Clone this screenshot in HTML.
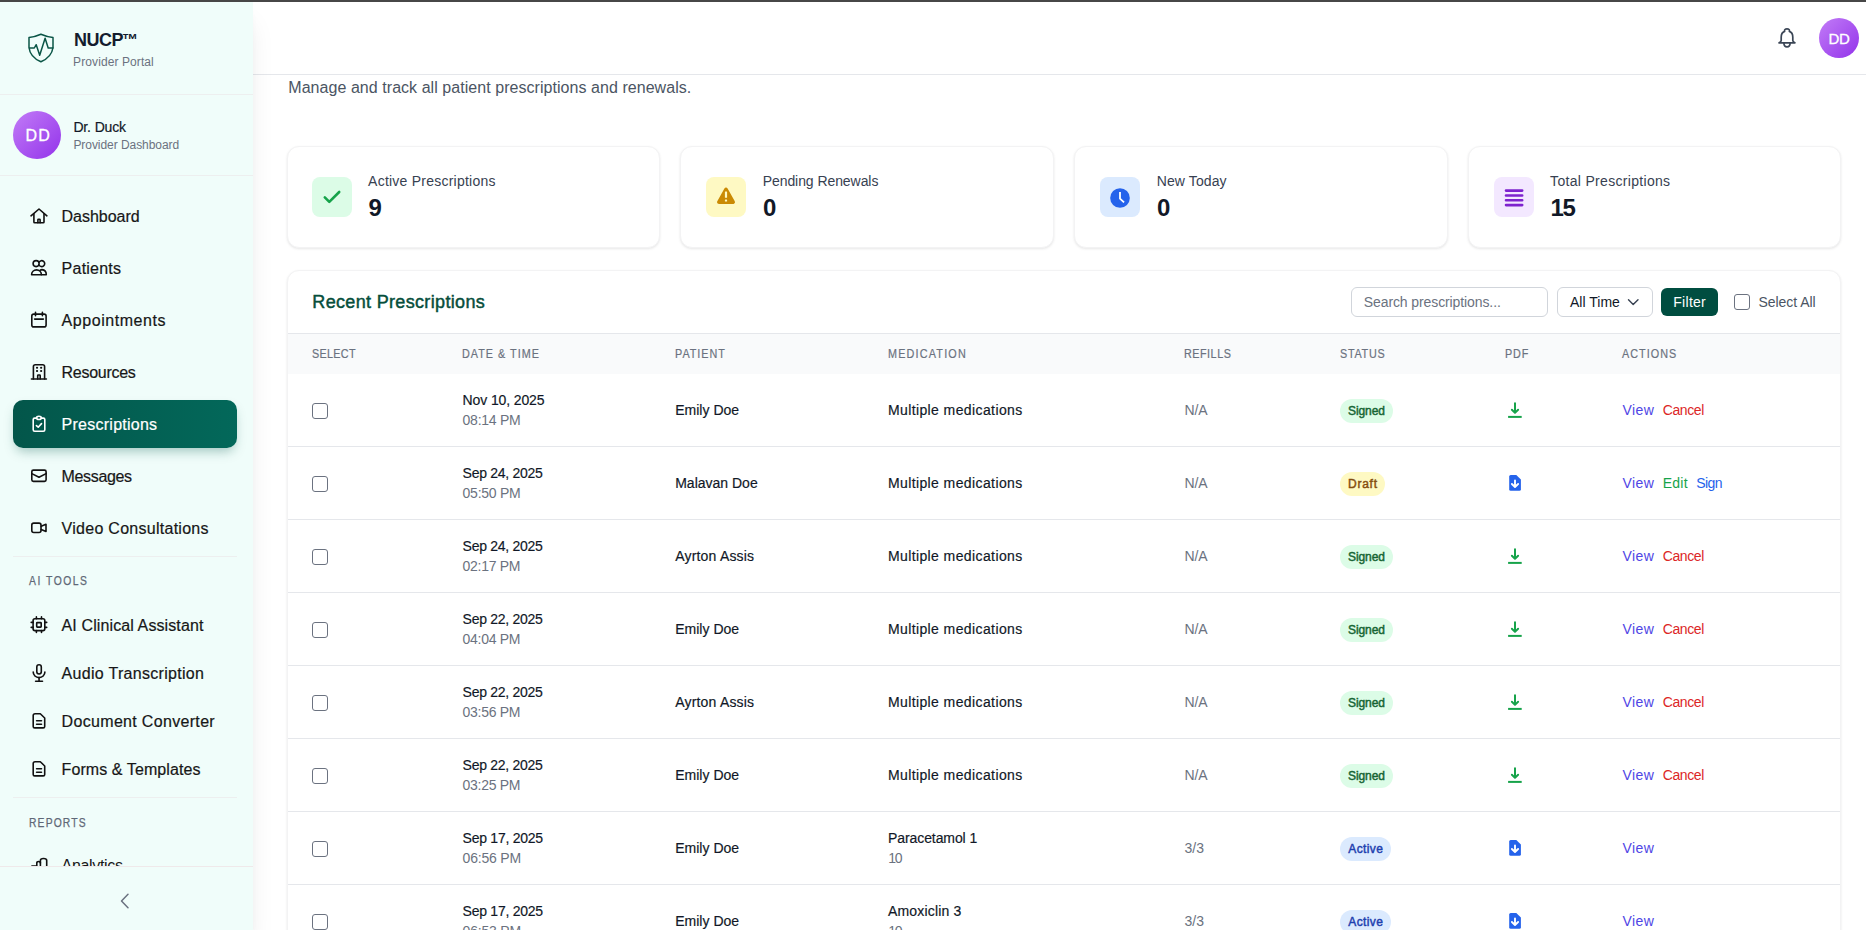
<!DOCTYPE html><html><head><meta charset="utf-8"><style>
*{box-sizing:border-box;margin:0;padding:0}
html,body{width:1866px;height:930px;overflow:hidden;background:#fff;font-family:"Liberation Sans",sans-serif;color:#111827}
.abs{position:absolute;white-space:nowrap}
.topbar{position:absolute;left:0;top:0;width:1866px;height:2px;background:#474747;z-index:50}
.side{position:absolute;left:0;top:0;width:253px;height:930px;background:#f0fdfa;z-index:10;overflow:hidden}
.sideshadow{position:absolute;left:0;top:0;width:253px;height:930px;z-index:9;box-shadow:0 20px 25px -5px rgba(0,0,0,.1),0 8px 10px -6px rgba(0,0,0,.1)}
.ic{position:absolute;width:32px;height:32px;fill:none;stroke:#111;stroke-width:1.6;stroke-linecap:round;stroke-linejoin:round}
.nt{position:absolute;left:61px;font-size:16px;line-height:16px;color:#171717;white-space:nowrap;letter-spacing:.25px}
.sec{position:absolute;left:29px;font-size:12px;line-height:12px;font-weight:bold;letter-spacing:.5px;color:#6b7b8c}
.hr{position:absolute;height:1px;background:#edefef}
.card{position:absolute;background:#fff;border:1px solid #f3f3f4;border-radius:12px;box-shadow:0 1px 3px rgba(0,0,0,.07),0 1px 2px rgba(0,0,0,.03)}
.ib{position:absolute;width:40px;height:40px;border-radius:8px}
.lb{position:absolute;font-size:14px;line-height:14px;color:#374151;white-space:nowrap}
.vl{position:absolute;font-size:24px;line-height:24px;font-weight:bold;color:#111827;white-space:nowrap}
.th{position:absolute;font-size:12px;line-height:12px;letter-spacing:.6px;color:#6b7280;white-space:nowrap}
.td{position:absolute;font-size:14px;line-height:14px;color:#111827;white-space:nowrap}
.cb{position:absolute;width:16px;height:16px;border:1.3px solid #6b7280;border-radius:3px;background:#fff}
.badge{position:absolute;height:24px;line-height:24px;padding:0 8px;border-radius:12px;font-size:12px;font-weight:bold;white-space:nowrap}
.signed{background:#dcfce7;color:#166534}
.draft{background:#fef9c3;color:#854d0e}
.activeb{background:#dbeafe;color:#1e40af}
.v{color:#4f46e5}.c{color:#dc2626}.e{color:#16a34a}.s{color:#2563eb}
</style></head><body>
<div class="topbar"></div>
<div class="sideshadow"></div>
<div class="side">
<svg class="ic" style="left:25px;top:30px;width:32px;height:36px;stroke:#0a5546;stroke-width:1.5" viewBox="0 0 32 36"><path d="M15.9 4.2 Q10 6.8 4 7.6 V17.5 Q5 27 15.9 31.8 Q26.8 27 28 17.5 V7.6 Q22 6.8 15.9 4.2Z"/><path d="M4.5 18 H9.3 L11.2 14.7 L14.7 25.2 L20.1 8.3 L23.2 18 H28"/></svg>
<div class="abs" style="left:74.10px;top:31px;font-size:18px;line-height:18px;font-weight:bold;color:#141c2e;letter-spacing:0.000px;letter-spacing:-.55px">NUCP</div>
<div class="abs" style="left:122px;top:31px;font-size:16px;line-height:17px;font-weight:bold;color:#141c2e">™</div>
<div class="abs" style="left:73.10px;top:56px;font-size:12px;line-height:12px;font-weight:normal;color:#6b7280;letter-spacing:0.095px;">Provider Portal</div>
<div class="hr" style="left:0;top:94px;width:253px;background:#edefef"></div>
<div class="abs" style="left:13px;top:111px;width:48px;height:48px;border-radius:24px;background:linear-gradient(135deg,#c27cf7,#9333ea);"></div>
<div class="abs" style="left:25.50px;top:128px;font-size:16px;line-height:16px;font-weight:normal;color:#fff;letter-spacing:1.275px;-webkit-text-stroke:.3px #fff">DD</div>
<div class="abs" style="left:73.40px;top:120px;font-size:14px;line-height:14px;font-weight:normal;color:#111827;letter-spacing:-0.136px;-webkit-text-stroke:.18px #111827">Dr. Duck</div>
<div class="abs" style="left:73.40px;top:139px;font-size:12px;line-height:12px;font-weight:normal;color:#6b7280;letter-spacing:-0.056px;">Provider Dashboard</div>
<div class="hr" style="left:0;top:175px;width:253px;background:#edefef"></div>
<div class="abs" style="left:13px;top:400px;width:224px;height:48px;border-radius:10px;background:linear-gradient(90deg,#03564a,#03685a);box-shadow:0 6px 12px -3px rgba(3,86,74,.35)"></div>
<svg class="ic" style="left:24px;top:200px;stroke:#111" viewBox="0 0 32 32"><path d="M7 15.8 L15 9 L22.9 15.8"/><path d="M9.9 13.8 V22 Q9.9 22.8 10.7 22.8 H19.2 Q20 22.8 20 22 V13.8"/><path d="M13.9 22.8 V19.8 Q13.9 19.2 14.5 19.2 H15.5 Q16.1 19.2 16.1 19.8 V22.8"/></svg>
<div class="abs" style="left:61.60px;top:209px;font-size:16px;line-height:16px;font-weight:normal;color:#171717;letter-spacing:-0.031px;-webkit-text-stroke:.2px #171717">Dashboard</div>
<svg class="ic" style="left:24px;top:252px;stroke:#111" viewBox="0 0 32 32"><circle cx="12.1" cy="11.6" r="3"/><path d="M15.05 10.2 A3 3 0 1 1 15.05 13"/><path d="M7.6 22.8 A4.9 4.9 0 0 1 17.4 22.8 Z"/><path d="M16 18.3 Q17 17.6 18 17.6 Q22.3 18 22.3 22.8 H17.4"/></svg>
<div class="abs" style="left:61.60px;top:261px;font-size:16px;line-height:16px;font-weight:normal;color:#171717;letter-spacing:0.232px;-webkit-text-stroke:.2px #171717">Patients</div>
<svg class="ic" style="left:24px;top:304px;stroke:#111" viewBox="0 0 32 32"><rect x="7.8" y="10.1" width="14.3" height="12.8" rx="2"/><path d="M11.5 8.3 V11.8 M18.4 8.3 V11.8 M10.6 15.1 H19.4"/></svg>
<div class="abs" style="left:61.60px;top:313px;font-size:16px;line-height:16px;font-weight:normal;color:#171717;letter-spacing:0.548px;-webkit-text-stroke:.2px #171717">Appointments</div>
<svg class="ic" style="left:24px;top:356px;stroke:#111" viewBox="0 0 32 32"><path d="M9.4 23 V10.6 Q9.4 8.7 11.3 8.7 H18.7 Q20.6 8.7 20.6 10.6 V23"/><path d="M7.4 23 H22.4"/><path d="M13.7 23 V19.6 Q13.7 19 14.3 19 H15.6 Q16.2 19 16.2 19.6 V23"/><path d="M12.9 11.8 h.3 M17 11.8 h.3 M12.9 15 h.3 M17 15 h.3" stroke-width="1.9"/></svg>
<div class="abs" style="left:61.60px;top:365px;font-size:16px;line-height:16px;font-weight:normal;color:#171717;letter-spacing:-0.275px;-webkit-text-stroke:.2px #171717">Resources</div>
<svg class="ic" style="left:24px;top:408px;stroke:#fff" viewBox="0 0 32 32"><path d="M12.6 10.1 H10.7 Q9.2 10.1 9.2 11.6 V21.8 Q9.2 23.3 10.7 23.3 H19.3 Q20.8 23.3 20.8 21.8 V11.6 Q20.8 10.1 19.3 10.1 H17.3"/><ellipse cx="14.95" cy="9.9" rx="2.3" ry="1.6"/><path d="M12.4 17.6 L14.2 19.2 L17.5 15.6"/></svg>
<div class="abs" style="left:61.60px;top:417px;font-size:16px;line-height:16px;font-weight:normal;color:#fff;letter-spacing:0.250px;-webkit-text-stroke:.2px #fff">Prescriptions</div>
<svg class="ic" style="left:24px;top:460px;stroke:#111" viewBox="0 0 32 32"><rect x="7.8" y="10.1" width="14.3" height="11.3" rx="1.6"/><path d="M7.8 13.6 L15 17.2 L22.1 13.6"/></svg>
<div class="abs" style="left:61.60px;top:469px;font-size:16px;line-height:16px;font-weight:normal;color:#171717;letter-spacing:-0.354px;-webkit-text-stroke:.2px #171717">Messages</div>
<svg class="ic" style="left:24px;top:512px;stroke:#111" viewBox="0 0 32 32"><rect x="7.8" y="11.1" width="9.2" height="9.4" rx="2"/><path d="M17.2 14.3 L22 12.3 V19.5 L17.2 17.5"/></svg>
<div class="abs" style="left:61.60px;top:521px;font-size:16px;line-height:16px;font-weight:normal;color:#171717;letter-spacing:0.272px;-webkit-text-stroke:.2px #171717">Video Consultations</div>
<div class="hr" style="left:13px;top:556px;width:224px"></div>
<div class="abs" style="left:28.90px;top:575px;font-size:12px;line-height:12px;font-weight:normal;color:#5f6877;letter-spacing:1.779px;transform:scaleX(0.86);transform-origin:0.00px 0;-webkit-text-stroke:.25px #5f6877">AI TOOLS</div>
<svg class="ic" style="left:24px;top:609px;stroke:#111" viewBox="0 0 32 32"><rect x="9.1" y="9.7" width="11.7" height="11.9" rx="1.8"/><rect x="12.7" y="13.6" width="4.5" height="4.5" rx=".6"/><path d="M12.4 7.9 V9.7 M17.5 7.9 V9.7 M12.4 21.6 V23.4 M17.5 21.6 V23.4 M7.2 13.4 H9.1 M7.2 18.4 H9.1 M20.8 13.4 H22.7 M20.8 18.4 H22.7"/></svg>
<div class="abs" style="left:61.60px;top:618px;font-size:16px;line-height:16px;font-weight:normal;color:#171717;letter-spacing:0.109px;-webkit-text-stroke:.2px #171717">AI Clinical Assistant</div>
<svg class="ic" style="left:24px;top:657px;stroke:#111" viewBox="0 0 32 32"><rect x="12.8" y="7.7" width="4.5" height="9.3" rx="2.25"/><path d="M9.2 15.1 A5.85 5.5 0 0 0 20.9 15.1"/><path d="M15.05 20.6 V24.3 M11.6 24.3 H18.5"/></svg>
<div class="abs" style="left:61.60px;top:666px;font-size:16px;line-height:16px;font-weight:normal;color:#171717;letter-spacing:0.294px;-webkit-text-stroke:.2px #171717">Audio Transcription</div>
<svg class="ic" style="left:24px;top:705px;stroke:#111" viewBox="0 0 32 32"><path d="M9.2 21.4 V10.6 Q9.2 8.7 11.1 8.7 H16.3 L20.7 13 V21.4 Q20.7 22.9 19.2 22.9 H10.7 Q9.2 22.9 9.2 21.4Z"/><path d="M12.6 15.8 H17.5 M12.6 19.3 H17.5"/></svg>
<div class="abs" style="left:61.60px;top:714px;font-size:16px;line-height:16px;font-weight:normal;color:#171717;letter-spacing:0.322px;-webkit-text-stroke:.2px #171717">Document Converter</div>
<svg class="ic" style="left:24px;top:753px;stroke:#111" viewBox="0 0 32 32"><path d="M9.2 21.4 V10.6 Q9.2 8.7 11.1 8.7 H16.3 L20.7 13 V21.4 Q20.7 22.9 19.2 22.9 H10.7 Q9.2 22.9 9.2 21.4Z"/><path d="M12.6 15.8 H17.5 M12.6 19.3 H17.5"/></svg>
<div class="abs" style="left:61.60px;top:762px;font-size:16px;line-height:16px;font-weight:normal;color:#171717;letter-spacing:0.081px;-webkit-text-stroke:.2px #171717">Forms &amp; Templates</div>
<div class="hr" style="left:13px;top:797px;width:224px"></div>
<div class="abs" style="left:28.90px;top:817px;font-size:12px;line-height:12px;font-weight:normal;color:#5f6877;letter-spacing:1.344px;transform:scaleX(0.86);transform-origin:0.00px 0;-webkit-text-stroke:.25px #5f6877">REPORTS</div>
<svg class="ic" style="left:24px;top:840px;" viewBox="0 0 32 32"><path d="M7.9 26 H12.8 V23 Q12.8 21.5 14.6 21.5 Q16.4 21.5 16.4 23 V32"/><path d="M16.4 23 V20.5 Q16.4 18.5 19.5 18.5 Q22.7 18.5 22.7 20.5 V32"/></svg>
<div class="abs" style="left:61.60px;top:858px;font-size:16px;line-height:16px;font-weight:normal;color:#171717;letter-spacing:-0.325px;">Analytics</div>
<div class="abs" style="left:0;top:866px;width:253px;height:64px;background:#f0fdfa;border-top:1px solid #efe9ea"></div>
<svg class="ic" style="left:109px;top:885px;stroke:#6b7280;stroke-width:1.5" viewBox="0 0 32 32"><path d="M19 9.3 L12.5 16 L19 22.8"/></svg>
</div>
<div class="abs" style="left:253px;top:0;width:1613px;height:75px;background:#fff;border-bottom:1px solid #e5e7eb"></div>
<svg class="ic" style="left:1770px;top:20px;width:32px;height:36px;stroke:#3b4656;stroke-width:1.7" viewBox="0 0 32 36"><path d="M9.1 22.8 H24.9 Q22.8 21.9 22.8 20.6 V17.2 Q22.8 12.6 19.4 11.4 Q19.9 8.9 17 8.9 Q14.1 8.9 14.6 11.4 Q11.2 12.6 11.2 17.2 V20.6 Q11.2 21.9 9.1 22.8 Z"/><path d="M13.9 23 Q13.9 26.9 17 26.9 Q20.1 26.9 20.1 23"/></svg>
<div class="abs" style="left:1819px;top:18px;width:40px;height:40px;border-radius:20px;background:linear-gradient(135deg,#c27cf7,#9333ea)"></div>
<div class="abs" style="left:1828.40px;top:31px;font-size:15px;line-height:15px;font-weight:normal;color:#fff;letter-spacing:-0.325px;-webkit-text-stroke:.3px #fff">DD</div>
<div class="abs" style="left:288.30px;top:80px;font-size:16px;line-height:16px;font-weight:normal;color:#4b5563;letter-spacing:0.050px;">Manage and track all patient prescriptions and renewals.</div>
<div class="card" style="left:287px;top:146px;width:373px;height:102px"></div>
<div class="ib" style="left:312px;top:177px;background:#dcfce7"><svg viewBox="0 0 40 40" style="position:absolute;left:0;top:0;width:40px;height:40px;fill:none;stroke:#16a34a;stroke-width:2.6;stroke-linecap:round;stroke-linejoin:round"><path d="M12.8 20.3 L17.3 24.8 L27.2 15"/></svg></div>
<div class="abs" style="left:368.10px;top:174px;font-size:14px;line-height:14px;font-weight:normal;color:#374151;letter-spacing:0.232px;">Active Prescriptions</div>
<div class="abs" style="left:368.60px;top:196px;font-size:24px;line-height:24px;font-weight:bold;color:#111827;letter-spacing:0.000px;">9</div>
<div class="card" style="left:680px;top:146px;width:374px;height:102px"></div>
<div class="ib" style="left:706px;top:177px;background:#fef9c3"><svg viewBox="0 0 40 40" style="position:absolute;left:0;top:0;width:40px;height:40px"><path d="M20 10.6 Q21 10.6 21.6 11.6 L28.8 24.2 Q29.6 25.8 28 26.7 Q27.6 27 27 27 H13 Q11.2 27 11 25.2 Q11 24.7 11.3 24.2 L18.4 11.6 Q19 10.6 20 10.6Z" fill="#ca8a04"/><rect x="18.9" y="14.4" width="2.2" height="6.4" rx=".5" fill="#fef9c3"/><rect x="18.9" y="22.4" width="2.2" height="2" rx=".5" fill="#fef9c3"/></svg></div>
<div class="abs" style="left:762.70px;top:174px;font-size:14px;line-height:14px;font-weight:normal;color:#374151;letter-spacing:-0.070px;">Pending Renewals</div>
<div class="abs" style="left:763.00px;top:196px;font-size:24px;line-height:24px;font-weight:bold;color:#111827;letter-spacing:0.000px;">0</div>
<div class="card" style="left:1074px;top:146px;width:374px;height:102px"></div>
<div class="ib" style="left:1100px;top:177px;background:#dbeafe"><svg viewBox="0 0 40 40" style="position:absolute;left:0;top:0;width:40px;height:40px"><circle cx="20" cy="21" r="9.8" fill="#2563eb"/><path d="M20 16 V21.6 L23.4 24.8" fill="none" stroke="#fff" stroke-width="1.8" stroke-linecap="square"/></svg></div>
<div class="abs" style="left:1156.80px;top:174px;font-size:14px;line-height:14px;font-weight:normal;color:#374151;letter-spacing:0.088px;">New Today</div>
<div class="abs" style="left:1157.00px;top:196px;font-size:24px;line-height:24px;font-weight:bold;color:#111827;letter-spacing:0.000px;">0</div>
<div class="card" style="left:1468px;top:146px;width:373px;height:102px"></div>
<div class="ib" style="left:1494px;top:177px;background:#f3e8ff"><svg viewBox="0 0 40 40" style="position:absolute;left:0;top:0;width:40px;height:40px;stroke:#7e22ce;stroke-width:2.6;stroke-linecap:round"><path d="M12 13.6 H28.2 M12 18.5 H28.2 M12 23.3 H28.2 M12 28.1 H28.2"/></svg></div>
<div class="abs" style="left:1550.10px;top:174px;font-size:14px;line-height:14px;font-weight:normal;color:#374151;letter-spacing:0.312px;">Total Prescriptions</div>
<div class="abs" style="left:1550.50px;top:196px;font-size:24px;line-height:24px;font-weight:bold;color:#111827;letter-spacing:-1.250px;">15</div>
<div class="card" style="left:287px;top:270px;width:1554px;height:700px"></div>
<div class="abs" style="left:312.30px;top:293px;font-size:18px;line-height:18px;font-weight:normal;color:#064e3b;letter-spacing:0.336px;-webkit-text-stroke:.45px #064e3b">Recent Prescriptions</div>
<div class="abs" style="left:1351px;top:287px;width:197px;height:30px;border:1px solid #d1d5db;border-radius:6px;background:#fff"></div>
<div class="abs" style="left:1363.80px;top:295px;font-size:14px;line-height:14px;font-weight:normal;color:#6b7280;letter-spacing:-0.102px;">Search prescriptions...</div>
<div class="abs" style="left:1557px;top:287px;width:96px;height:30px;border:1px solid #d1d5db;border-radius:6px;background:#fff"></div>
<div class="abs" style="left:1570.00px;top:295px;font-size:14px;line-height:14px;font-weight:normal;color:#111827;letter-spacing:0.007px;">All Time</div>
<svg class="ic" style="left:1617px;top:286px;stroke:#374151;stroke-width:1.4" viewBox="0 0 32 32"><path d="M11.5 13.8 L16.2 18.6 L21 13.8"/></svg>
<div class="abs" style="left:1661px;top:288px;width:57px;height:28px;border-radius:6px;background:#004d40"></div>
<div class="abs" style="left:1673.30px;top:295px;font-size:14px;line-height:14px;font-weight:normal;color:#fff;letter-spacing:0.275px;">Filter</div>
<div class="cb" style="left:1734px;top:294px;width:16px;height:16px"></div>
<div class="abs" style="left:1758.60px;top:295px;font-size:14px;line-height:14px;font-weight:normal;color:#4b5563;letter-spacing:-0.069px;">Select All</div>
<div class="abs" style="left:288px;top:333px;width:1552px;height:1px;background:#e5e7eb"></div>
<div class="abs" style="left:288px;top:334px;width:1552px;height:40px;background:#f9fafb"></div>
<div class="abs" style="left:312.30px;top:348px;font-size:12px;line-height:12px;font-weight:normal;color:#6b7280;letter-spacing:0.342px;transform:scaleX(0.9);transform-origin:0.00px 0;-webkit-text-stroke:.2px #6b7280">SELECT</div>
<div class="abs" style="left:462.30px;top:348px;font-size:12px;line-height:12px;font-weight:normal;color:#6b7280;letter-spacing:1.119px;transform:scaleX(0.9);transform-origin:0.00px 0;-webkit-text-stroke:.2px #6b7280">DATE &amp; TIME</div>
<div class="abs" style="left:675.10px;top:348px;font-size:12px;line-height:12px;font-weight:normal;color:#6b7280;letter-spacing:1.095px;transform:scaleX(0.9);transform-origin:0.00px 0;-webkit-text-stroke:.2px #6b7280">PATIENT</div>
<div class="abs" style="left:887.80px;top:348px;font-size:12px;line-height:12px;font-weight:normal;color:#6b7280;letter-spacing:1.327px;transform:scaleX(0.9);transform-origin:0.00px 0;-webkit-text-stroke:.2px #6b7280">MEDICATION</div>
<div class="abs" style="left:1184.20px;top:348px;font-size:12px;line-height:12px;font-weight:normal;color:#6b7280;letter-spacing:0.562px;transform:scaleX(0.9);transform-origin:0.00px 0;-webkit-text-stroke:.2px #6b7280">REFILLS</div>
<div class="abs" style="left:1339.90px;top:348px;font-size:12px;line-height:12px;font-weight:normal;color:#6b7280;letter-spacing:0.811px;transform:scaleX(0.9);transform-origin:0.00px 0;-webkit-text-stroke:.2px #6b7280">STATUS</div>
<div class="abs" style="left:1505.20px;top:348px;font-size:12px;line-height:12px;font-weight:normal;color:#6b7280;letter-spacing:0.944px;transform:scaleX(0.9);transform-origin:0.00px 0;-webkit-text-stroke:.2px #6b7280">PDF</div>
<div class="abs" style="left:1622.30px;top:348px;font-size:12px;line-height:12px;font-weight:normal;color:#6b7280;letter-spacing:1.141px;transform:scaleX(0.9);transform-origin:0.00px 0;-webkit-text-stroke:.2px #6b7280">ACTIONS</div>
<div class="cb" style="left:312px;top:403px"></div>
<div class="abs" style="left:462.60px;top:393px;font-size:14px;line-height:14px;font-weight:normal;color:#111827;letter-spacing:-0.123px;-webkit-text-stroke:.18px #111827">Nov 10, 2025</div>
<div class="abs" style="left:462.60px;top:413px;font-size:14px;line-height:14px;font-weight:normal;color:#6b7280;letter-spacing:-0.268px;">08:14 PM</div>
<div class="abs" style="left:675.20px;top:403px;font-size:14px;line-height:14px;font-weight:normal;color:#111827;letter-spacing:0.019px;-webkit-text-stroke:.18px #111827">Emily Doe</div>
<div class="abs" style="left:887.90px;top:403px;font-size:14px;line-height:14px;font-weight:normal;color:#111827;letter-spacing:0.396px;-webkit-text-stroke:.18px #111827">Multiple medications</div>
<div class="abs" style="left:1184.60px;top:403px;font-size:14px;line-height:14px;font-weight:normal;color:#6b7280;letter-spacing:-0.138px;">N/A</div>
<div class="abs" style="left:1340px;top:399px;width:53px;height:24px;border-radius:12px;background:#dcfce7"></div>
<div class="abs" style="left:1348.00px;top:405px;font-size:12px;line-height:12px;font-weight:normal;color:#166534;letter-spacing:-0.075px;-webkit-text-stroke:.45px #166534">Signed</div>
<svg viewBox="0 0 32 32" style="position:absolute;width:32px;height:32px;fill:none;stroke:#16a34a;stroke-width:2;stroke-linecap:round;stroke-linejoin:round;left:1499px;top:394px"><path d="M16 9.3 V18.8 M12.9 15.8 L16 18.9 L19.1 15.8"/><path d="M9.1 22.9 H22.7" stroke-linecap="butt"/></svg>
<div class="abs" style="left:1622.40px;top:403px;font-size:14px;line-height:14px;font-weight:normal;color:#4f46e5;letter-spacing:0.450px;">View</div>
<div class="abs" style="left:1662.70px;top:403px;font-size:14px;line-height:14px;font-weight:normal;color:#dc2626;letter-spacing:-0.385px;">Cancel</div>
<div class="abs" style="left:288px;top:446px;width:1552px;height:1px;background:#e5e7eb"></div>
<div class="cb" style="left:312px;top:476px"></div>
<div class="abs" style="left:462.60px;top:466px;font-size:14px;line-height:14px;font-weight:normal;color:#111827;letter-spacing:-0.286px;-webkit-text-stroke:.18px #111827">Sep 24, 2025</div>
<div class="abs" style="left:462.60px;top:486px;font-size:14px;line-height:14px;font-weight:normal;color:#6b7280;letter-spacing:-0.268px;">05:50 PM</div>
<div class="abs" style="left:675.20px;top:476px;font-size:14px;line-height:14px;font-weight:normal;color:#111827;letter-spacing:0.000px;-webkit-text-stroke:.18px #111827">Malavan Doe</div>
<div class="abs" style="left:887.90px;top:476px;font-size:14px;line-height:14px;font-weight:normal;color:#111827;letter-spacing:0.396px;-webkit-text-stroke:.18px #111827">Multiple medications</div>
<div class="abs" style="left:1184.60px;top:476px;font-size:14px;line-height:14px;font-weight:normal;color:#6b7280;letter-spacing:-0.138px;">N/A</div>
<div class="abs" style="left:1340px;top:472px;width:45px;height:24px;border-radius:12px;background:#fef9c3"></div>
<div class="abs" style="left:1348.00px;top:478px;font-size:12px;line-height:12px;font-weight:normal;color:#854d0e;letter-spacing:0.750px;-webkit-text-stroke:.45px #854d0e">Draft</div>
<svg viewBox="0 0 32 32" style="position:absolute;width:32px;height:32px;left:1499px;top:467px"><path d="M11.7 8.1 H17.3 L21.9 12.4 V22.2 Q21.9 23.7 20.4 23.7 H11.7 Q10.2 23.7 10.2 22.2 V9.6 Q10.2 8.1 11.7 8.1Z" fill="#2563eb"/><path d="M16 13.5 V19.8 M12.9 17 L16 20 L19.1 17" fill="none" stroke="#fff" stroke-width="1.9" stroke-linecap="round" stroke-linejoin="round"/></svg>
<div class="abs" style="left:1622.40px;top:476px;font-size:14px;line-height:14px;font-weight:normal;color:#4f46e5;letter-spacing:0.450px;">View</div>
<div class="abs" style="left:1662.70px;top:476px;font-size:14px;line-height:14px;font-weight:normal;color:#16a34a;letter-spacing:0.258px;">Edit</div>
<div class="abs" style="left:1696.30px;top:476px;font-size:14px;line-height:14px;font-weight:normal;color:#2563eb;letter-spacing:-0.600px;">Sign</div>
<div class="abs" style="left:288px;top:519px;width:1552px;height:1px;background:#e5e7eb"></div>
<div class="cb" style="left:312px;top:549px"></div>
<div class="abs" style="left:462.60px;top:539px;font-size:14px;line-height:14px;font-weight:normal;color:#111827;letter-spacing:-0.286px;-webkit-text-stroke:.18px #111827">Sep 24, 2025</div>
<div class="abs" style="left:462.60px;top:559px;font-size:14px;line-height:14px;font-weight:normal;color:#6b7280;letter-spacing:-0.296px;">02:17 PM</div>
<div class="abs" style="left:675.20px;top:549px;font-size:14px;line-height:14px;font-weight:normal;color:#111827;letter-spacing:0.195px;-webkit-text-stroke:.18px #111827">Ayrton Assis</div>
<div class="abs" style="left:887.90px;top:549px;font-size:14px;line-height:14px;font-weight:normal;color:#111827;letter-spacing:0.396px;-webkit-text-stroke:.18px #111827">Multiple medications</div>
<div class="abs" style="left:1184.60px;top:549px;font-size:14px;line-height:14px;font-weight:normal;color:#6b7280;letter-spacing:-0.138px;">N/A</div>
<div class="abs" style="left:1340px;top:545px;width:53px;height:24px;border-radius:12px;background:#dcfce7"></div>
<div class="abs" style="left:1348.00px;top:551px;font-size:12px;line-height:12px;font-weight:normal;color:#166534;letter-spacing:-0.075px;-webkit-text-stroke:.45px #166534">Signed</div>
<svg viewBox="0 0 32 32" style="position:absolute;width:32px;height:32px;fill:none;stroke:#16a34a;stroke-width:2;stroke-linecap:round;stroke-linejoin:round;left:1499px;top:540px"><path d="M16 9.3 V18.8 M12.9 15.8 L16 18.9 L19.1 15.8"/><path d="M9.1 22.9 H22.7" stroke-linecap="butt"/></svg>
<div class="abs" style="left:1622.40px;top:549px;font-size:14px;line-height:14px;font-weight:normal;color:#4f46e5;letter-spacing:0.450px;">View</div>
<div class="abs" style="left:1662.70px;top:549px;font-size:14px;line-height:14px;font-weight:normal;color:#dc2626;letter-spacing:-0.385px;">Cancel</div>
<div class="abs" style="left:288px;top:592px;width:1552px;height:1px;background:#e5e7eb"></div>
<div class="cb" style="left:312px;top:622px"></div>
<div class="abs" style="left:462.60px;top:612px;font-size:14px;line-height:14px;font-weight:normal;color:#111827;letter-spacing:-0.286px;-webkit-text-stroke:.18px #111827">Sep 22, 2025</div>
<div class="abs" style="left:462.60px;top:632px;font-size:14px;line-height:14px;font-weight:normal;color:#6b7280;letter-spacing:-0.296px;">04:04 PM</div>
<div class="abs" style="left:675.20px;top:622px;font-size:14px;line-height:14px;font-weight:normal;color:#111827;letter-spacing:0.019px;-webkit-text-stroke:.18px #111827">Emily Doe</div>
<div class="abs" style="left:887.90px;top:622px;font-size:14px;line-height:14px;font-weight:normal;color:#111827;letter-spacing:0.396px;-webkit-text-stroke:.18px #111827">Multiple medications</div>
<div class="abs" style="left:1184.60px;top:622px;font-size:14px;line-height:14px;font-weight:normal;color:#6b7280;letter-spacing:-0.138px;">N/A</div>
<div class="abs" style="left:1340px;top:618px;width:53px;height:24px;border-radius:12px;background:#dcfce7"></div>
<div class="abs" style="left:1348.00px;top:624px;font-size:12px;line-height:12px;font-weight:normal;color:#166534;letter-spacing:-0.075px;-webkit-text-stroke:.45px #166534">Signed</div>
<svg viewBox="0 0 32 32" style="position:absolute;width:32px;height:32px;fill:none;stroke:#16a34a;stroke-width:2;stroke-linecap:round;stroke-linejoin:round;left:1499px;top:613px"><path d="M16 9.3 V18.8 M12.9 15.8 L16 18.9 L19.1 15.8"/><path d="M9.1 22.9 H22.7" stroke-linecap="butt"/></svg>
<div class="abs" style="left:1622.40px;top:622px;font-size:14px;line-height:14px;font-weight:normal;color:#4f46e5;letter-spacing:0.450px;">View</div>
<div class="abs" style="left:1662.70px;top:622px;font-size:14px;line-height:14px;font-weight:normal;color:#dc2626;letter-spacing:-0.385px;">Cancel</div>
<div class="abs" style="left:288px;top:665px;width:1552px;height:1px;background:#e5e7eb"></div>
<div class="cb" style="left:312px;top:695px"></div>
<div class="abs" style="left:462.60px;top:685px;font-size:14px;line-height:14px;font-weight:normal;color:#111827;letter-spacing:-0.286px;-webkit-text-stroke:.18px #111827">Sep 22, 2025</div>
<div class="abs" style="left:462.60px;top:705px;font-size:14px;line-height:14px;font-weight:normal;color:#6b7280;letter-spacing:-0.296px;">03:56 PM</div>
<div class="abs" style="left:675.20px;top:695px;font-size:14px;line-height:14px;font-weight:normal;color:#111827;letter-spacing:0.195px;-webkit-text-stroke:.18px #111827">Ayrton Assis</div>
<div class="abs" style="left:887.90px;top:695px;font-size:14px;line-height:14px;font-weight:normal;color:#111827;letter-spacing:0.396px;-webkit-text-stroke:.18px #111827">Multiple medications</div>
<div class="abs" style="left:1184.60px;top:695px;font-size:14px;line-height:14px;font-weight:normal;color:#6b7280;letter-spacing:-0.138px;">N/A</div>
<div class="abs" style="left:1340px;top:691px;width:53px;height:24px;border-radius:12px;background:#dcfce7"></div>
<div class="abs" style="left:1348.00px;top:697px;font-size:12px;line-height:12px;font-weight:normal;color:#166534;letter-spacing:-0.075px;-webkit-text-stroke:.45px #166534">Signed</div>
<svg viewBox="0 0 32 32" style="position:absolute;width:32px;height:32px;fill:none;stroke:#16a34a;stroke-width:2;stroke-linecap:round;stroke-linejoin:round;left:1499px;top:686px"><path d="M16 9.3 V18.8 M12.9 15.8 L16 18.9 L19.1 15.8"/><path d="M9.1 22.9 H22.7" stroke-linecap="butt"/></svg>
<div class="abs" style="left:1622.40px;top:695px;font-size:14px;line-height:14px;font-weight:normal;color:#4f46e5;letter-spacing:0.450px;">View</div>
<div class="abs" style="left:1662.70px;top:695px;font-size:14px;line-height:14px;font-weight:normal;color:#dc2626;letter-spacing:-0.385px;">Cancel</div>
<div class="abs" style="left:288px;top:738px;width:1552px;height:1px;background:#e5e7eb"></div>
<div class="cb" style="left:312px;top:768px"></div>
<div class="abs" style="left:462.60px;top:758px;font-size:14px;line-height:14px;font-weight:normal;color:#111827;letter-spacing:-0.286px;-webkit-text-stroke:.18px #111827">Sep 22, 2025</div>
<div class="abs" style="left:462.60px;top:778px;font-size:14px;line-height:14px;font-weight:normal;color:#6b7280;letter-spacing:-0.296px;">03:25 PM</div>
<div class="abs" style="left:675.20px;top:768px;font-size:14px;line-height:14px;font-weight:normal;color:#111827;letter-spacing:0.019px;-webkit-text-stroke:.18px #111827">Emily Doe</div>
<div class="abs" style="left:887.90px;top:768px;font-size:14px;line-height:14px;font-weight:normal;color:#111827;letter-spacing:0.396px;-webkit-text-stroke:.18px #111827">Multiple medications</div>
<div class="abs" style="left:1184.60px;top:768px;font-size:14px;line-height:14px;font-weight:normal;color:#6b7280;letter-spacing:-0.138px;">N/A</div>
<div class="abs" style="left:1340px;top:764px;width:53px;height:24px;border-radius:12px;background:#dcfce7"></div>
<div class="abs" style="left:1348.00px;top:770px;font-size:12px;line-height:12px;font-weight:normal;color:#166534;letter-spacing:-0.075px;-webkit-text-stroke:.45px #166534">Signed</div>
<svg viewBox="0 0 32 32" style="position:absolute;width:32px;height:32px;fill:none;stroke:#16a34a;stroke-width:2;stroke-linecap:round;stroke-linejoin:round;left:1499px;top:759px"><path d="M16 9.3 V18.8 M12.9 15.8 L16 18.9 L19.1 15.8"/><path d="M9.1 22.9 H22.7" stroke-linecap="butt"/></svg>
<div class="abs" style="left:1622.40px;top:768px;font-size:14px;line-height:14px;font-weight:normal;color:#4f46e5;letter-spacing:0.450px;">View</div>
<div class="abs" style="left:1662.70px;top:768px;font-size:14px;line-height:14px;font-weight:normal;color:#dc2626;letter-spacing:-0.385px;">Cancel</div>
<div class="abs" style="left:288px;top:811px;width:1552px;height:1px;background:#e5e7eb"></div>
<div class="cb" style="left:312px;top:841px"></div>
<div class="abs" style="left:462.60px;top:831px;font-size:14px;line-height:14px;font-weight:normal;color:#111827;letter-spacing:-0.259px;-webkit-text-stroke:.18px #111827">Sep 17, 2025</div>
<div class="abs" style="left:462.60px;top:851px;font-size:14px;line-height:14px;font-weight:normal;color:#6b7280;letter-spacing:-0.196px;">06:56 PM</div>
<div class="abs" style="left:675.20px;top:841px;font-size:14px;line-height:14px;font-weight:normal;color:#111827;letter-spacing:0.019px;-webkit-text-stroke:.18px #111827">Emily Doe</div>
<div class="abs" style="left:888.00px;top:831px;font-size:14px;line-height:14px;font-weight:normal;color:#111827;letter-spacing:-0.087px;-webkit-text-stroke:.18px #111827">Paracetamol 1</div>
<div class="abs" style="left:888.30px;top:851px;font-size:14px;line-height:14px;font-weight:normal;color:#6b7280;letter-spacing:-1.425px;">10</div>
<div class="abs" style="left:1184.60px;top:841px;font-size:14px;line-height:14px;font-weight:normal;color:#6b7280;letter-spacing:-0.050px;">3/3</div>
<div class="abs" style="left:1340px;top:837px;width:51px;height:24px;border-radius:12px;background:#dbeafe"></div>
<div class="abs" style="left:1348.25px;top:843px;font-size:12px;line-height:12px;font-weight:normal;color:#1e40af;letter-spacing:0.375px;-webkit-text-stroke:.45px #1e40af">Active</div>
<svg viewBox="0 0 32 32" style="position:absolute;width:32px;height:32px;left:1499px;top:832px"><path d="M11.7 8.1 H17.3 L21.9 12.4 V22.2 Q21.9 23.7 20.4 23.7 H11.7 Q10.2 23.7 10.2 22.2 V9.6 Q10.2 8.1 11.7 8.1Z" fill="#2563eb"/><path d="M16 13.5 V19.8 M12.9 17 L16 20 L19.1 17" fill="none" stroke="#fff" stroke-width="1.9" stroke-linecap="round" stroke-linejoin="round"/></svg>
<div class="abs" style="left:1622.40px;top:841px;font-size:14px;line-height:14px;font-weight:normal;color:#4f46e5;letter-spacing:0.450px;">View</div>
<div class="abs" style="left:288px;top:884px;width:1552px;height:1px;background:#e5e7eb"></div>
<div class="cb" style="left:312px;top:914px"></div>
<div class="abs" style="left:462.60px;top:904px;font-size:14px;line-height:14px;font-weight:normal;color:#111827;letter-spacing:-0.259px;-webkit-text-stroke:.18px #111827">Sep 17, 2025</div>
<div class="abs" style="left:462.60px;top:924px;font-size:14px;line-height:14px;font-weight:normal;color:#6b7280;letter-spacing:-0.196px;">06:53 PM</div>
<div class="abs" style="left:675.20px;top:914px;font-size:14px;line-height:14px;font-weight:normal;color:#111827;letter-spacing:0.019px;-webkit-text-stroke:.18px #111827">Emily Doe</div>
<div class="abs" style="left:888.00px;top:904px;font-size:14px;line-height:14px;font-weight:normal;color:#111827;letter-spacing:0.177px;-webkit-text-stroke:.18px #111827">Amoxiclin 3</div>
<div class="abs" style="left:888.30px;top:924px;font-size:14px;line-height:14px;font-weight:normal;color:#6b7280;letter-spacing:-1.425px;">10</div>
<div class="abs" style="left:1184.60px;top:914px;font-size:14px;line-height:14px;font-weight:normal;color:#6b7280;letter-spacing:-0.050px;">3/3</div>
<div class="abs" style="left:1340px;top:910px;width:51px;height:24px;border-radius:12px;background:#dbeafe"></div>
<div class="abs" style="left:1348.25px;top:916px;font-size:12px;line-height:12px;font-weight:normal;color:#1e40af;letter-spacing:0.375px;-webkit-text-stroke:.45px #1e40af">Active</div>
<svg viewBox="0 0 32 32" style="position:absolute;width:32px;height:32px;left:1499px;top:905px"><path d="M11.7 8.1 H17.3 L21.9 12.4 V22.2 Q21.9 23.7 20.4 23.7 H11.7 Q10.2 23.7 10.2 22.2 V9.6 Q10.2 8.1 11.7 8.1Z" fill="#2563eb"/><path d="M16 13.5 V19.8 M12.9 17 L16 20 L19.1 17" fill="none" stroke="#fff" stroke-width="1.9" stroke-linecap="round" stroke-linejoin="round"/></svg>
<div class="abs" style="left:1622.40px;top:914px;font-size:14px;line-height:14px;font-weight:normal;color:#4f46e5;letter-spacing:0.450px;">View</div>
</body></html>
